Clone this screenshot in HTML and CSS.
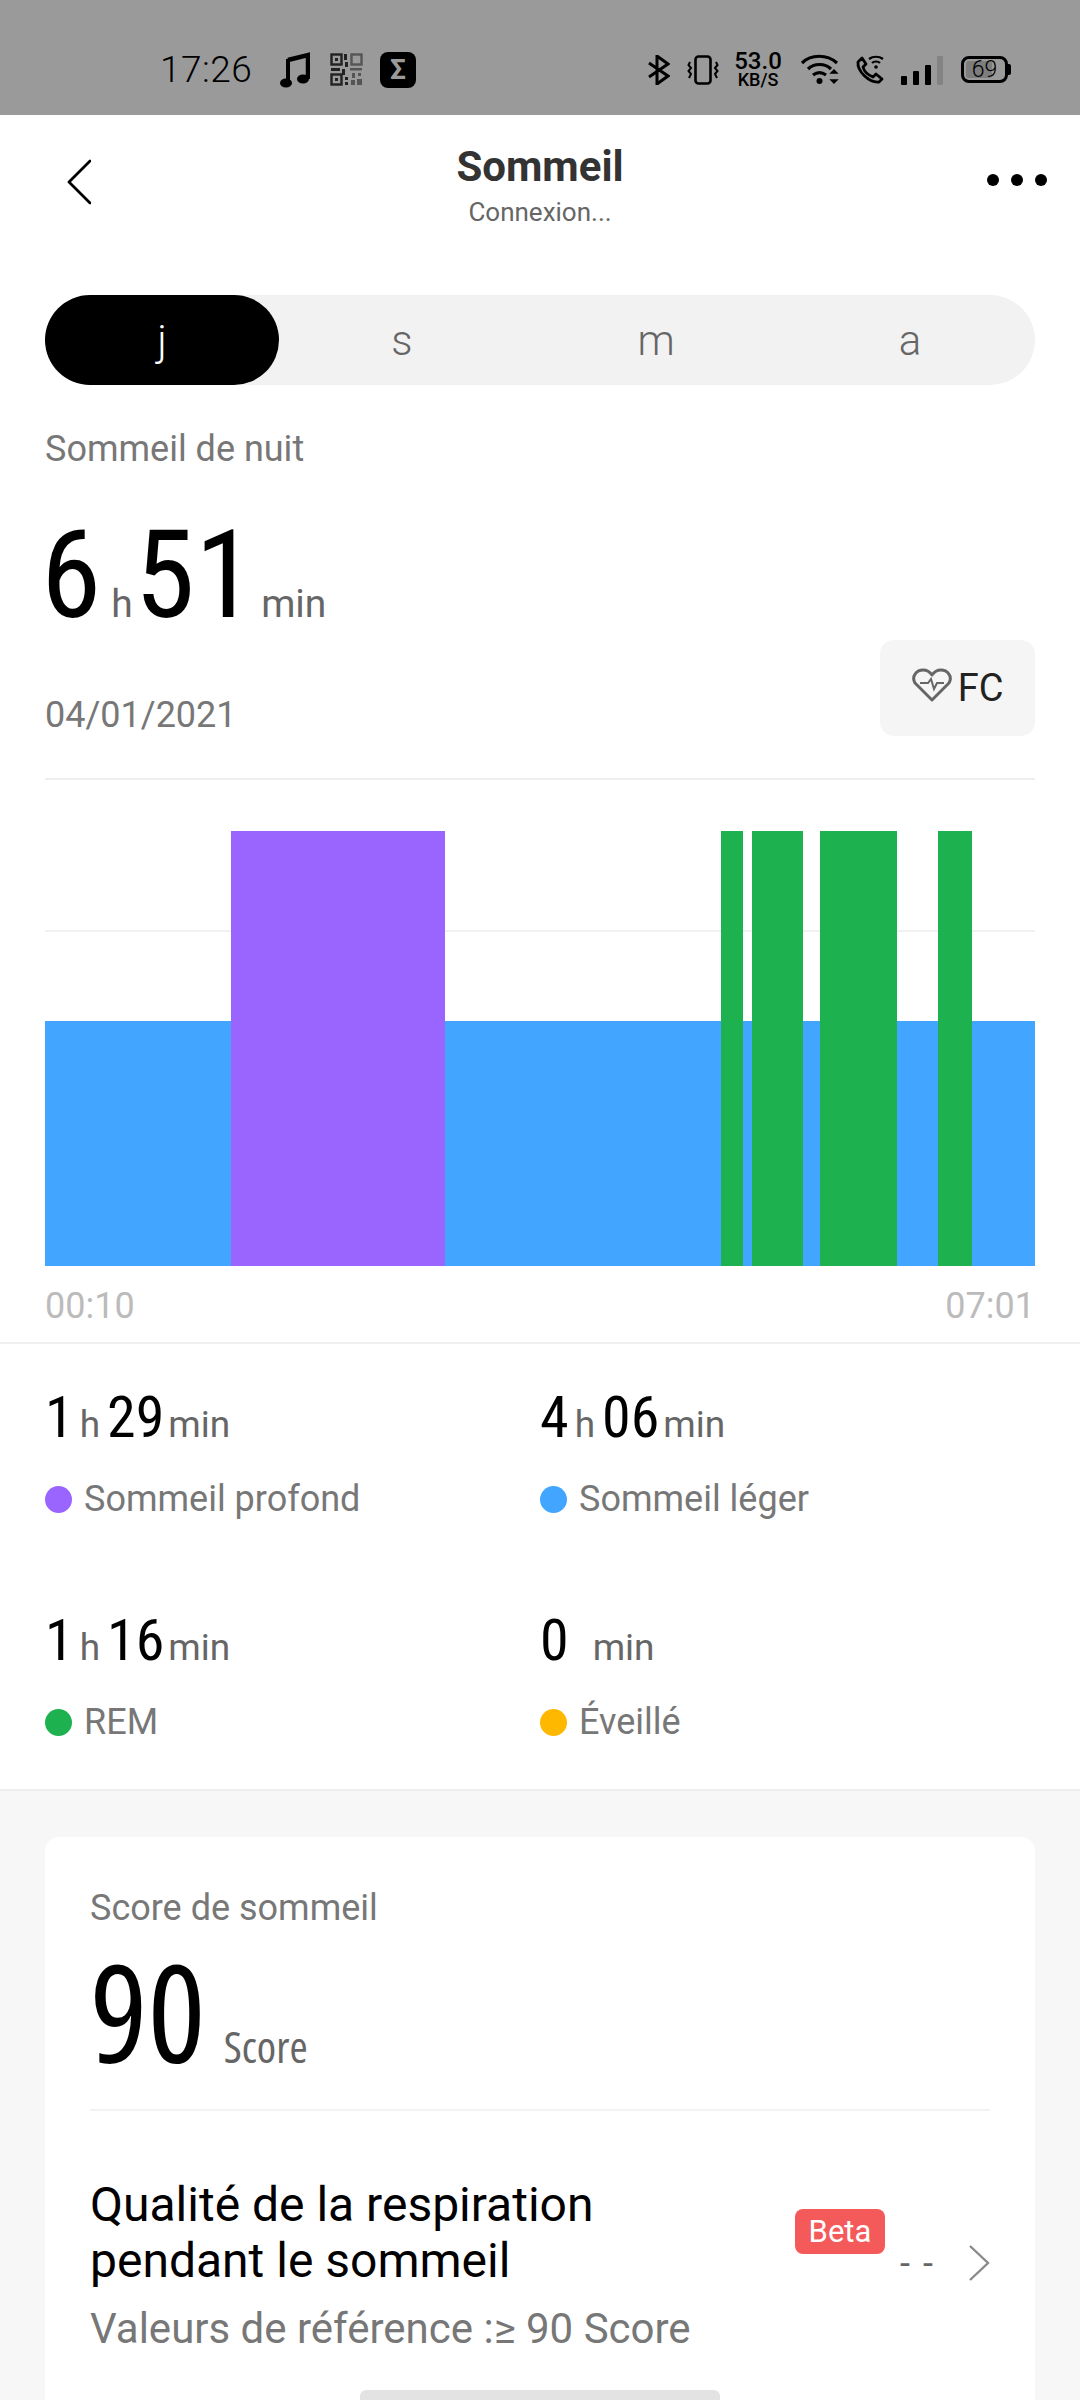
FILE: index.html
```html
<!DOCTYPE html>
<html lang="fr">
<head>
	<meta charset="UTF-8">
	<title>Sommeil</title>
	<link rel="stylesheet" href="styles.css">
</head>
<body>
<div class="page">
	<div class="statusbar">
		<div class="status-left">
			<span class="time">17:26</span>
			<svg class="ic-music" viewBox="0 0 30 36"><path d="M8 8 28 3V27" fill="none" stroke="#000" stroke-width="4.500"/><path d="M8 7V31" stroke="#000" stroke-width="4"/><ellipse cx="6" cy="31" rx="6" ry="4.6"/><ellipse cx="23" cy="27" rx="6" ry="4.6"/></svg>
			<svg class="ic-qr" viewBox="0 0 33 33"><g fill="none" stroke="#222" stroke-width="2.4"><rect x="1.5" y="1.5" width="10" height="10"/><rect x="1.5" y="21.5" width="10" height="10"/></g><g fill="none" stroke="#555" stroke-width="2.4"><rect x="21.5" y="1.5" width="10" height="10"/></g><g fill="#222"><rect x="5" y="5" width="3" height="3"/><rect x="5" y="25" width="3" height="3"/><rect x="14" y="1" width="3" height="6"/><rect x="15" y="9" width="3" height="5"/><rect x="1" y="15" width="9" height="3"/><rect x="12" y="16" width="3" height="6"/><rect x="15" y="24" width="3" height="3"/><rect x="15" y="29" width="3" height="3"/></g><g fill="#555"><rect x="20" y="15" width="12" height="2.5"/><rect x="22" y="20" width="3" height="5"/><rect x="28" y="20" width="3" height="3"/><rect x="21" y="27" width="4" height="5"/><rect x="27" y="26" width="5" height="6"/></g></svg>
			<div class="ic-sigma">Σ</div>
		</div>
		<div class="status-right">
			<svg class="ic-bt" viewBox="0 0 22 30"><path d="M1 8 20 21 9 29V1L20 9 1 22" fill="none" stroke="#000" stroke-width="3"/></svg>
			<svg class="ic-vib" viewBox="0 0 32 30"><rect x="8.5" y="1.5" width="15" height="27" rx="3" fill="none" stroke="#000" stroke-width="2.6"/><path d="M3 7 1.5 10 4 13 1.5 16 4 19 2 23M29 7 30.5 10 28 13 30.5 16 28 19 30 23" fill="none" stroke="#000" stroke-width="2"/></svg>
			<div class="speed"><span class="speed-num">53.0</span><span class="speed-unit">KB/S</span></div>
			<svg class="ic-wifi" viewBox="0 0 40 32"><g fill="none" stroke="#000" stroke-width="3.2"><path d="M1 9C10 0 26 0 36 9"/><path d="M7 15C13 9 24 9 30 15"/><path d="M12 21C16 18 21 18 25 21"/></g><circle cx="18.500" cy="27" r="3"/><path d="M33 16 36 19H30ZM33 29 36 26H30Z" stroke="#000" stroke-width="1.4"/></svg>
			<svg class="ic-call" viewBox="0 0 30 30"><path d="M3 7 7 3 11 9 8 12C9 16 13 20 18 22L21 19 27 24 24 27C14 28 2 16 3 7Z" fill="none" stroke="#000" stroke-width="2.8" stroke-linejoin="round"/><g fill="none" stroke="#000" stroke-width="2.2"><path d="M14 4C18 1 24 1 28 4"/><path d="M17 8C19 6 23 6 25 8"/></g><circle cx="21" cy="12" r="1.800"/></svg>
			<div class="signal">
				<span class="sig sig1"></span>
				<span class="sig sig2"></span>
				<span class="sig sig3"></span>
				<span class="sig sig4"></span>
			</div>
			<div class="battery">
				<div class="batt-body"><span class="batt-fill"></span><span class="batt-num">69</span></div>
				<span class="batt-tip"></span>
			</div>
		</div>
	</div>

	<div class="header">
		<svg class="ic-back" viewBox="0 0 24 46"><path d="M23 2 2 23 23 44" fill="none" stroke="#000" stroke-width="2.8" stroke-linecap="round" stroke-linejoin="round"/></svg>
		<div class="header-title">
			<div class="title">Sommeil</div>
			<div class="subtitle">Connexion...</div>
		</div>
		<div class="dots"><i></i><i></i><i></i></div>
	</div>

	<div class="tabs">
		<div class="tab active">j</div>
		<div class="tab">s</div>
		<div class="tab">m</div>
		<div class="tab">a</div>
	</div>

	<div class="summary">
		<div class="summary-label">Sommeil de nuit</div>
		<div class="total">
			<span class="big">6</span><span class="big-unit unit-h">h</span><span class="big">51</span><span class="big-unit unit-min">min</span>
		</div>
		<div class="date-row">
			<span class="date">04/01/2021</span>
			<div class="fc-btn">
				<svg class="ic-heart" viewBox="0 0 40 34"><path d="M20 32 3 15C-1 8 5 2 11 2 15 2 18 4 20 7 22 4 25 2 29 2 35 2 41 8 37 15Z" fill="none" stroke="#666" stroke-width="3" stroke-linejoin="round"/><path d="M8 15H16L19 11 22 21 25 15H32" fill="none" stroke="#666" stroke-width="2"/></svg>
				<span>FC</span>
			</div>
		</div>
	</div>

	<svg class="chart" viewBox="0 0 990 490" width="990" height="490">
		<rect x="0" y="0" width="990" height="2" fill="#eeeeee"/>
		<rect x="0" y="152" width="990" height="2" fill="#f1f1f1"/>
		<rect x="0" y="243" width="990" height="245" fill="#42a5ff"/>
		<rect x="186" y="53" width="214" height="435" fill="#9a64ff"/>
		<rect x="676" y="53" width="22" height="435" fill="#1db14f"/>
		<rect x="707" y="53" width="51" height="435" fill="#1db14f"/>
		<rect x="775" y="53" width="77" height="435" fill="#1db14f"/>
		<rect x="893" y="53" width="34" height="435" fill="#1db14f"/>
	</svg>
	<div class="axis"><span>00:10</span><span>07:01</span></div>

	<div class="stats">
		<div class="stat">
			<div class="stat-val"><span class="num">1</span><span class="unit h">h</span><span class="num">29</span><span class="unit m">min</span></div>
			<div class="stat-name"><i class="dot purple"></i>Sommeil profond</div>
		</div>
		<div class="stat">
			<div class="stat-val"><span class="num">4</span><span class="unit h">h</span><span class="num">06</span><span class="unit m">min</span></div>
			<div class="stat-name"><i class="dot blue"></i>Sommeil léger</div>
		</div>
		<div class="stat">
			<div class="stat-val"><span class="num">1</span><span class="unit h">h</span><span class="num">16</span><span class="unit m">min</span></div>
			<div class="stat-name"><i class="dot green"></i>REM</div>
		</div>
		<div class="stat">
			<div class="stat-val"><span class="num">0</span><span class="unit m wide">min</span></div>
			<div class="stat-name"><i class="dot yellow"></i>Éveillé</div>
		</div>
	</div>

	<div class="lower">
		<div class="card">
			<div class="card-label">Score de sommeil</div>
			<div class="score"><span class="score-num">90</span><span class="score-unit">Score</span></div>
			<div class="card-line"></div>
			<div class="breath">
				<div class="breath-text">
					<div class="breath-title">Qualité de la respiration<br>pendant le sommeil</div>
					<div class="breath-ref">Valeurs de référence :≥ 90 Score</div>
				</div>
				<div class="breath-side">
					<span class="beta">Beta</span>
					<span class="dash">- -</span>
					<svg class="ic-next" viewBox="0 0 22 36"><path d="M2 1 20 18 2 35" fill="none" stroke="#8a8a8a" stroke-width="2.4"/></svg>
				</div>
			</div>
		</div>
	</div>
	<div class="homebar"></div>
</div>
</body>
</html>
```
FILE: styles.css
```css
*{box-sizing:border-box;}
html,body{margin:0;padding:0;}
body{background:#fff;font-family:Roboto,"Liberation Sans",sans-serif;}
.page{width:1080px;height:2400px;position:relative;overflow:hidden;display:flex;flex-direction:column;}

/* status bar */
.statusbar{height:115px;flex:none;background:#9a9a9a;display:flex;justify-content:space-between;align-items:center;padding:24px 69px 0 160px;color:#000;}
.status-left,.status-right{display:flex;align-items:center;}
.time{font-size:37px;line-height:40px;width:90px;font-weight:300;letter-spacing:.5px;}
.ic-music{width:30px;height:36px;margin-left:30px;}
.ic-qr{width:33px;height:33px;margin-left:20px;}
.ic-sigma{width:36px;height:36px;margin-left:17px;background:#000;color:#9a9a9a;border-radius:8px;font-size:28px;font-weight:700;line-height:36px;text-align:center;}
.ic-bt{width:22px;height:30px;margin-right:2px;}
.ic-vib{width:32px;height:30px;margin-left:15px;}
.speed{width:48px;margin-left:15px;display:flex;flex-direction:column;align-items:center;font-weight:500;}
.speed-num{font-size:24px;line-height:21px;}
.speed-unit{font-size:18px;line-height:16px;}
.ic-wifi{width:40px;height:32px;margin-left:19px;}
.ic-call{width:30px;height:30px;margin-left:14px;}
.signal{display:flex;align-items:flex-end;gap:6px;height:30px;margin-left:16px;}
.sig{width:6px;background:#000;border-radius:1px;}
.sig1{height:9px;}
.sig2{height:14px;}
.sig3{height:20px;}
.sig4{height:29px;background:#838383;}
.battery{display:flex;align-items:center;margin-left:18px;}
.batt-body{width:47px;height:27px;border:3px solid #000;border-radius:8px;position:relative;font-size:23px;line-height:21px;font-weight:300;text-align:center;}
.batt-fill{position:absolute;left:2px;top:2px;bottom:2px;width:26px;background:#7d7d7d;border-radius:3px;}
.batt-num{position:relative;}
.batt-tip{width:3px;height:11px;background:#000;border-radius:0 2px 2px 0;}

/* header */
.header{height:180px;flex:none;position:relative;display:flex;justify-content:center;}
.ic-back{position:absolute;left:67px;top:44px;width:24px;height:46px;}
.header-title{text-align:center;padding-top:29px;}
.title{font-size:42px;line-height:46px;font-weight:700;color:#333;}
.subtitle{font-size:26px;line-height:34px;color:#666;margin-top:5px;}
.dots{position:absolute;left:987px;top:59px;display:flex;gap:12px;}
.dots i{width:12px;height:12px;border-radius:50%;background:#000;}

/* j s m a */
.tabs{margin:0 45px;height:90px;flex:none;background:#f2f2f2;border-radius:45px;display:flex;}
.tab{flex:none;width:254px;text-align:center;font-size:42px;line-height:92px;color:#666;font-weight:300;}
.tab.active{width:234px;margin-right:-4px;background:#000;color:#fff;border-radius:45px;}

/* total */
.summary{padding:0 45px;height:393px;flex:none;}
.summary-label{font-size:36px;line-height:40px;color:#777;padding-top:44px;box-sizing:content-box;height:40px;}
.total{display:flex;align-items:baseline;height:120px;margin:47px 0 0 -4px;}
.big{font-stretch:75%;font-size:122px;line-height:120px;color:#000;}
.big-unit{font-size:39px;color:#666;}
.unit-h{margin:0 2px 0 10px;}
.unit-min{margin-left:6px;}
.date-row{display:flex;justify-content:space-between;align-items:flex-start;margin-top:4px;}
.date{font-size:36px;line-height:40px;color:#777;margin-top:55px;}
.fc-btn{width:155px;height:96px;background:#f5f5f5;border-radius:14px;display:flex;align-items:center;justify-content:center;gap:6px;font-size:38px;color:#222;}
.ic-heart{width:40px;height:34px;margin-top:-6px;}

/* chart */
.chart{display:block;margin:0 45px;flex:none;}
.axis{margin:0 45px;height:74px;flex:none;display:flex;justify-content:space-between;font-size:36px;line-height:50px;color:#bbb;padding-top:13px;}

/* stats */
.stats{flex:none;height:449px;border-top:2px solid #f0f0f0;border-bottom:2px solid #eee;padding:0 0 0 45px;display:grid;grid-template-columns:495px 495px;grid-auto-rows:223px;}
.stat{padding-top:43px;}
.stat-val{display:flex;align-items:baseline;height:60px;}
.num{font-stretch:75%;font-size:58px;line-height:60px;color:#000;}
.unit{font-size:37px;color:#666;}
.unit.h{margin:0 7px 0 6px;}
.unit.m{margin-left:4px;}
.unit.m.wide{margin-left:24px;}
.stat-name{display:flex;align-items:center;font-size:36px;line-height:44px;color:#777;margin-top:30px;}
.dot{width:27px;height:27px;border-radius:50%;margin-right:12px;}
.purple{background:#9a64ff;}
.blue{background:#42a5ff;}
.green{background:#1db14f;}
.yellow{background:#ffb800;}

/* score card */
.lower{flex:1;background:#f7f7f7;padding:46px 45px 0;}
.card{background:#fff;border-radius:14px 14px 0 0;height:100%;padding:48px 45px 0;}
.card-label{font-size:36px;line-height:46px;color:#777;}
.score{display:flex;align-items:baseline;height:136px;margin-top:12px;font-family:"Open Sans",sans-serif;font-stretch:75%;}
.score-num{font-size:136px;line-height:136px;color:#000;}
.score-unit{font-size:44px;color:#666;margin-left:18px;}
.card-line{height:2px;background:#f3f3f3;margin-top:30px;}
.breath{display:flex;justify-content:space-between;margin-top:66px;}
.breath-title{font-size:48px;line-height:56px;color:#000;}
.breath-ref{font-size:42px;line-height:56px;color:#777;margin-top:12px;}
.breath-side{position:relative;width:200px;height:130px;}
.beta{position:absolute;left:5px;top:32px;width:90px;height:45px;background:#f55a5a;border-radius:8px;color:#fff;font-size:31px;line-height:45px;text-align:center;}
.dash{position:absolute;left:110px;top:65px;font-size:36px;line-height:44px;color:#666;letter-spacing:2px;}
.ic-next{position:absolute;left:178px;top:68px;width:22px;height:36px;}
.homebar{position:absolute;left:360px;bottom:0;width:360px;height:10px;background:#e3e3e3;border-radius:6px 6px 0 0;}
```
